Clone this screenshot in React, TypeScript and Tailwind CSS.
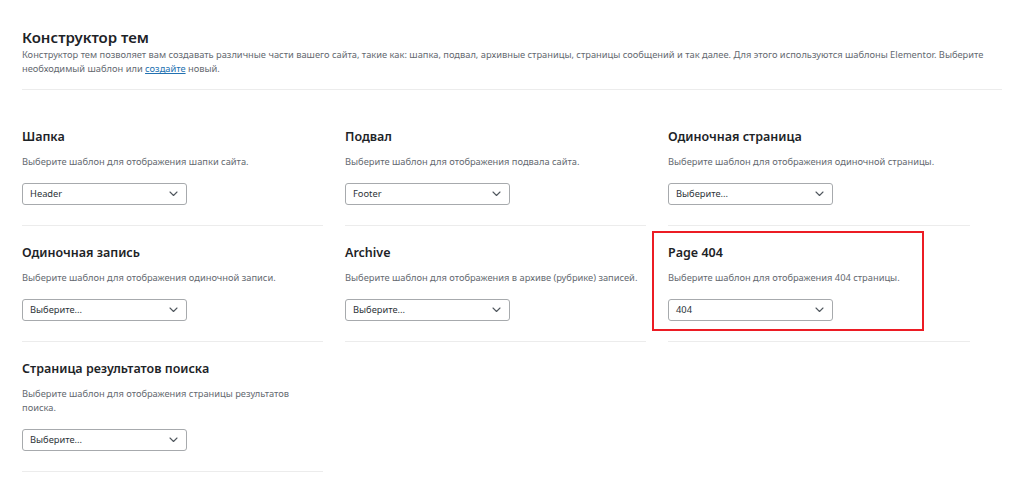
import React from "react";

const font = { fontFamily: '"Noto Sans", "Open Sans", Arial, sans-serif' };

function Chevron() {
  return (
    <svg width="9" height="6" viewBox="0 0 9 6" fill="none" className="text-[#50575e]">
      <path d="M1 1l3.5 3.5L8 1" stroke="currentColor" strokeWidth="1.1" strokeLinecap="round" strokeLinejoin="round" />
    </svg>
  );
}

function Select({ value }: { value: string }) {
  return (
    <div className="flex h-[22px] w-[165px] items-center justify-between rounded-[3px] border border-[#a7aaad] bg-white pl-[7px] pr-[8px] text-[9.3px] text-[#2c3338]">
      <span>{value}</span>
      <Chevron />
    </div>
  );
}

type Cell = { title: string; desc: string; value: string; highlight?: boolean };

const cells: Cell[] = [
  { title: "Шапка", desc: "Выберите шаблон для отображения шапки сайта.", value: "Header" },
  { title: "Подвал", desc: "Выберите шаблон для отображения подвала сайта.", value: "Footer" },
  { title: "Одиночная страница", desc: "Выберите шаблон для отображения одиночной страницы.", value: "Выберите..." },
  { title: "Одиночная запись", desc: "Выберите шаблон для отображения одиночной записи.", value: "Выберите..." },
  { title: "Archive", desc: "Выберите шаблон для отображения в архиве (рубрике) записей.", value: "Выберите..." },
  { title: "Page 404", desc: "Выберите шаблон для отображения 404 страницы.", value: "404", highlight: true },
  { title: "Страница результатов поиска", desc: "Выберите шаблон для отображения страницы результатов поиска.", value: "Выберите..." },
];

export default function App() {
  return (
    <div className="min-h-[482px] w-[1024px] bg-white" style={font}>
      <div className="pl-[22px] pr-[22px] pt-[27px]">
        <h1 className="text-[15px] font-semibold leading-[20px] text-[#1d2327]">Конструктор тем</h1>
        <p className="mt-[1px] text-[9.3px] leading-[14px] text-[#646970]">
          <span className="whitespace-nowrap">
            Конструктор тем позволяет вам создавать различные части вашего сайта, такие как: шапка, подвал, архивные страницы, страницы сообщений и так далее. Для этого используются шаблоны Elementor. Выберите
          </span>
          <br />
          необходимый шаблон или <span className="text-[#2271b1] underline">создайте</span> новый.
        </p>
        <div className="mt-[13px] h-px w-[980px] bg-[#ececec]" />
        <div className="mt-[20px] grid grid-cols-[301px_301px_302px] gap-x-[22px]">
          {cells.map((c) => (
            <div key={c.title} className="relative border-b border-[#ececec] pb-[20px] pt-[18px]">
              {c.highlight && (
                <div className="pointer-events-none absolute left-[-16px] top-[5px] h-[100px] w-[272px] border-2 border-[#ec1c24]" />
              )}
              <h2 className="text-[12.5px] font-semibold leading-[18px] text-[#1d2327]">{c.title}</h2>
              <p className="mt-[9px] text-[9.3px] leading-[14px] text-[#646970]">{c.desc}</p>
              <div className="mt-[14px]">
                <Select value={c.value} />
              </div>
            </div>
          ))}
        </div>
      </div>
    </div>
  );
}
